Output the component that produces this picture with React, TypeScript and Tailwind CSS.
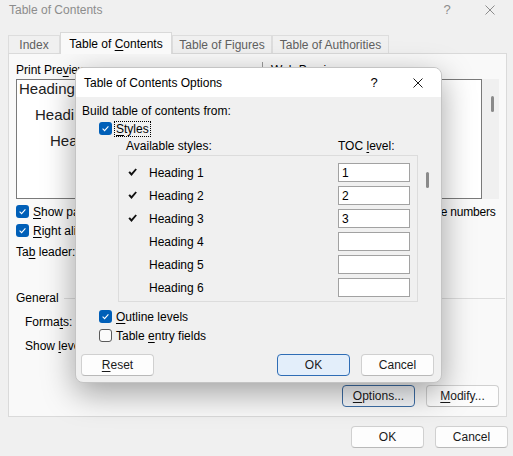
import React from 'react';

const U = ({ children }: { children: React.ReactNode }) => (
  <span className="underline underline-offset-[2px] decoration-[1px]">{children}</span>
);

const CheckBox = ({ checked }: { checked?: boolean }) =>
  checked ? (
    <span className="flex h-[13px] w-[13px] shrink-0 items-center justify-center rounded-[3px] bg-[#005fb8]">
      <svg width="9" height="9" viewBox="0 0 9 9">
        <path d="M1.6 4.7 L3.6 6.6 L7.4 2.4" fill="none" stroke="#ffffff" strokeWidth="1.1" />
      </svg>
    </span>
  ) : (
    <span className="h-[13px] w-[13px] shrink-0 rounded-[3px] border border-[#5a5a5a] bg-[#fbfbfb]" />
  );

const CloseIcon = ({ color }: { color: string }) => (
  <svg width="10" height="10" viewBox="0 0 10 10">
    <path d="M0.5 0.5 L9.5 9.5 M9.5 0.5 L0.5 9.5" stroke={color} strokeWidth="1" fill="none" />
  </svg>
);

const Tick = () => (
  <svg width="9" height="9" viewBox="0 0 9 9">
    <path d="M0.4 4.6 L1.9 3.3 L3.5 5.1 L7.5 0.5 L8.9 1.6 L3.5 8 Z" fill="#111111" />
  </svg>
);

type BtnKind = 'normal' | 'default' | 'focus';

const Btn = ({ children, kind = 'normal' }: { children: React.ReactNode; kind?: BtnKind }) => {
  const look =
    kind === 'default'
      ? 'border-[#2f6db5] bg-[#e3eefa]'
      : kind === 'focus'
        ? 'border-[#3d6ea6] bg-[#f6f8fb]'
        : 'border-[#d0d0d0] border-b-[#b9b9b9] bg-[#fdfdfd]';
  return (
    <div className={`flex h-[22px] w-[73px] shrink-0 items-center justify-center rounded-[4px] border text-[12px] text-[#1a1a1a] ${look}`}>
      {children}
    </div>
  );
};

const styleRows = [
  { name: 'Heading 1', level: '1', on: true },
  { name: 'Heading 2', level: '2', on: true },
  { name: 'Heading 3', level: '3', on: true },
  { name: 'Heading 4', level: '', on: false },
  { name: 'Heading 5', level: '', on: false },
  { name: 'Heading 6', level: '', on: false },
];

const OptionsDialog = () => (
  <div className="absolute left-[75px] top-[67px] flex h-[316px] w-[367px] flex-col overflow-hidden rounded-[8px] border border-[#c4c4c4] bg-[#f0f0f0] shadow-[0_10px_32px_rgba(0,0,0,0.36)]">
    <div className="flex h-[29px] shrink-0 items-center bg-white pl-[8px] pr-[18px] text-[12px] text-black">
      <span>Table of Contents Options</span>
      <span className="ml-auto w-[14px] text-center text-[13px]">?</span>
      <span className="ml-[32px] flex w-[10px]">
        <CloseIcon color="#1a1a1a" />
      </span>
    </div>

    <div className="flex flex-col text-[12px] leading-[16px] text-black">
      <div className="mt-[6px] pl-[6px]">Build table of contents from:</div>

      <div className="flex h-[19px] items-center pl-[23px]">
        <CheckBox checked />
        <span className="ml-[2px] border border-dotted border-black px-[1px] leading-[14px]">
          <U>S</U>tyles
        </span>
      </div>

      <div className="flex h-[16px] items-center pl-[50px]">
        <span className="w-[212px]">Available styles:</span>
        <span>
          TOC <U>l</U>evel:
        </span>
      </div>

      <div className="mt-[1px] flex pl-[42px]">
        <div className="flex h-[147px] w-[300px] flex-col gap-[4px] border border-[#dcdcdc] pt-[7px]">
          {styleRows.map((r) => (
            <div key={r.name} className="flex h-[19px] items-center">
              <span className="flex w-[30px] pl-[9px]">{r.on && <Tick />}</span>
              <span className="flex-1">{r.name}</span>
              <div className="mr-[7px] flex h-[19px] w-[72px] items-center border border-[#a2a2a2] bg-white pl-[3px]">
                {r.level}
              </div>
            </div>
          ))}
        </div>
        <div className="ml-[8px] mt-[17px] h-[16px] w-[3px] rounded-full bg-[#8a8a8a]" />
      </div>

      <div className="mt-[5px] flex h-[19px] items-center gap-[4px] pl-[23px]">
        <CheckBox checked />
        <span>
          <U>O</U>utline levels
        </span>
      </div>
      <div className="flex h-[19px] items-center gap-[4px] pl-[23px]">
        <CheckBox />
        <span>
          Table <U>e</U>ntry fields
        </span>
      </div>

      <div className="mt-[9px] flex pl-[5px]">
        <Btn>
          <U>R</U>eset
        </Btn>
        <div className="ml-[123px]">
          <Btn kind="default">OK</Btn>
        </div>
        <div className="ml-[11px]">
          <Btn>Cancel</Btn>
        </div>
      </div>
    </div>
  </div>
);

const Tab = ({ label, active }: { label: React.ReactNode; active?: boolean }) =>
  active ? (
    <div className="relative z-10 -mb-px flex h-[22px] w-[112px] items-center justify-center border border-b-0 border-[#d9d9d9] bg-[#f9f9f9] text-black">
      {label}
    </div>
  ) : (
    <div className="flex h-[18px] items-center justify-center border border-b-0 border-[#dddddd] bg-[#f0f0f0] text-[#5f5f5f]">
      {label}
    </div>
  );

export default function App() {
  return (
    <div className="relative h-[456px] w-[513px] overflow-hidden bg-[#f0f0f0] font-['Liberation_Sans',Arial,sans-serif] text-[12px] leading-[16px] text-black">
      {/* title bar */}
      <div className="flex h-[20px] items-center pl-[9px] pr-[18px] text-[#8c8c8c]">
        <span>Table of Contents</span>
        <span className="ml-auto w-[14px] text-center text-[13px]">?</span>
        <span className="ml-[31px] flex w-[10px]">
          <CloseIcon color="#8c8c8c" />
        </span>
      </div>

      {/* tabs */}
      <div className="mt-[12px] flex h-[21px] items-end pl-[8px]">
        <div className="w-[52px]">
          <Tab label="Index" />
        </div>
        <Tab
          active
          label={
            <span>
              Table of <U>C</U>ontents
            </span>
          }
        />
        <div className="w-[100px]">
          <Tab label="Table of Figures" />
        </div>
        <div className="w-[117px]">
          <Tab label="Table of Authorities" />
        </div>
      </div>

      {/* tab panel */}
      <div className="ml-[8px] flex h-[364px] w-[499px] flex-col border border-[#dadada] bg-[#f9f9f9] px-[7px]">
        <div className="mt-[8px] flex">
          <div className="flex w-[246px] flex-col">
            <div className="h-[16px]">
              Print Pre<U>v</U>iew
            </div>
            <div className="mt-[1px] flex">
              <div className="flex h-[120px] w-[229px] flex-col gap-[8px] border border-[#7a7a7a] bg-white text-[15px] leading-[18px] text-[#222]">
                <div className="pl-[2px]">Heading 1</div>
                <div className="pl-[18px]">Heading 2</div>
                <div className="pl-[33px]">Heading 3</div>
              </div>
              <div className="h-[120px] w-[17px] bg-[#f0f0f0]" />
            </div>
          </div>
          <div className="w-[10px]">
            <div className="h-[137px] w-px bg-[#9a9a9a]" />
          </div>
          <div className="flex w-[228px] flex-col">
            <div className="h-[16px]">
              <U>W</U>eb Preview
            </div>
            <div className="mt-[1px] flex">
              <div className="h-[120px] w-[211px] border border-[#7a7a7a] bg-white" />
              <div className="h-[120px] w-[17px] bg-[#f0f0f0] pl-[9px] pt-[17px]">
                <div className="h-[16px] w-[3px] rounded-full bg-[#8a8a8a]" />
              </div>
            </div>
          </div>
        </div>

        <div className="mt-[3px] flex">
          <div className="flex w-[256px] shrink-0 flex-col">
            <div className="flex h-[19px] items-center gap-[4px]">
              <CheckBox checked />
              <span>
                <U>S</U>how page numbers
              </span>
            </div>
            <div className="flex h-[19px] items-center gap-[4px]">
              <CheckBox checked />
              <span>
                <U>R</U>ight align page numbers
              </span>
            </div>
          </div>
          <div className="flex flex-col">
            <div className="flex h-[19px] items-center gap-[4px] whitespace-nowrap">
              <CheckBox checked />
              <span className="tracking-[-0.2px]">
                Use <U>h</U>yperlinks instead of page numbers
              </span>
            </div>
          </div>
        </div>

        <div className="mt-[2px] flex h-[19px] items-center">
          <span>
            Ta<U>b</U> leader:
          </span>
        </div>

        <div className="mt-[29px] flex h-[16px] items-center -mr-[6px]">
          <span>General</span>
          <div className="ml-[5px] h-px flex-1 bg-[#dcdcdc]" />
        </div>

        <div className="mt-[8px] h-[16px] pl-[9px]">
          Forma<U>t</U>s:
        </div>
        <div className="mt-[8px] h-[16px] pl-[9px]">
          Show <U>l</U>evels:
        </div>

        <div className="mt-[31px] flex justify-end gap-[11px]">
          <Btn kind="focus">
            <U>O</U>ptions...
          </Btn>
          <Btn>
            <U>M</U>odify...
          </Btn>
        </div>
      </div>

      {/* bottom buttons */}
      <div className="mt-[9px] flex justify-end gap-[11px] pr-[5px]">
        <Btn>OK</Btn>
        <Btn>Cancel</Btn>
      </div>

      <OptionsDialog />
    </div>
  );
}
